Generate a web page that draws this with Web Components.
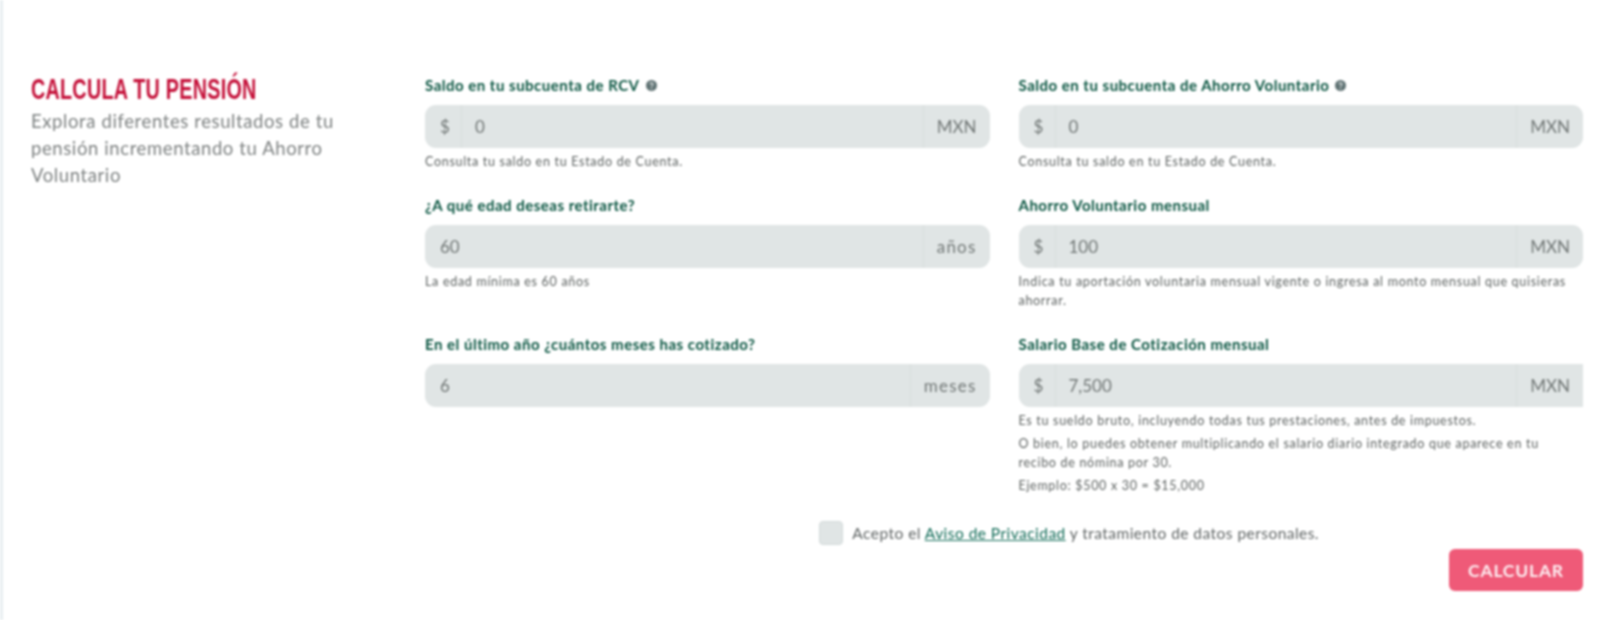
<!DOCTYPE html>
<html lang="es">
<head>
<meta charset="utf-8">
<title>Calcula tu pensión</title>
<style>
  html, body { margin: 0; background: #fff; }
</style>
</head>
<body>
<pension-page>
  <pension-intro slot="intro" heading="CALCULA TU PENSIÓN">Explora diferentes resultados de tu pensión incrementando tu Ahorro Voluntario</pension-intro>

  <money-field label="Saldo en tu subcuenta de RCV" info prefix="$" suffix="MXN" value="0">
    <p>Consulta tu saldo en tu Estado de Cuenta.</p>
  </money-field>
  <money-field label="Saldo en tu subcuenta de Ahorro Voluntario" info prefix="$" suffix="MXN" value="0">
    <p>Consulta tu saldo en tu Estado de Cuenta.</p>
  </money-field>
  <money-field label="¿A qué edad deseas retirarte?" suffix="años" value="60">
    <p>La edad mínima es 60 años</p>
  </money-field>
  <money-field label="Ahorro Voluntario mensual" prefix="$" suffix="MXN" value="100">
    <p>Indica tu aportación voluntaria mensual vigente o ingresa al monto mensual que quisieras ahorrar.</p>
  </money-field>
  <money-field label="En el último año ¿cuántos meses has cotizado?" suffix="meses" value="6"></money-field>
  <money-field label="Salario Base de Cotización mensual" prefix="$" suffix="MXN" value="7,500" square>
    <p>Es tu sueldo bruto, incluyendo todas tus prestaciones, antes de impuestos.</p>
    <p>O bien, lo puedes obtener multiplicando el salario diario integrado que aparece en tu recibo de nómina por 30.</p>
    <p>Ejemplo: $500 x 30 = $15,000</p>
  </money-field>

  <privacy-check slot="actions"></privacy-check>
  <pension-button slot="actions">CALCULAR</pension-button>
</pension-page>

<script>
const FONT = '"Lato", "Open Sans", sans-serif';

class PensionPage extends HTMLElement {
    constructor() {
        super();
        this.attachShadow({ mode: 'open' });
        this.shadowRoot.innerHTML = `
        <style>
            :host { display: block; height: 620px; box-sizing: border-box; overflow: hidden;
                    border-left: 3px solid #e8eef1; background: #fff; font-family: ${FONT};
                    filter: blur(.8px); }
            .wrap { display: flex; padding: 75px 28px 0 28px; }
            .side { flex: 0 0 394px; }
            .main { flex: 1; min-width: 0; }
            .grid { display: grid; grid-template-columns: 1fr 1fr; column-gap: 29px; row-gap: 20px; }
            .actions { display: flex; flex-direction: column; align-items: flex-end; margin-top: 22px; }
        </style>
        <div class="wrap">
            <div class="side"><slot name="intro"></slot></div>
            <div class="main">
                <div class="grid"><slot></slot></div>
                <div class="actions"><slot name="actions"></slot></div>
            </div>
        </div>`;
    }
}

class PensionIntro extends HTMLElement {
    constructor() {
        super();
        this.attachShadow({ mode: 'open' });
        this.shadowRoot.innerHTML = `
        <style>
            :host { display: block; }
            /* no condensed family installed, so squeeze the sans bold */
            h2 { margin: -2px 0 4px; height: 31px; font: 700 30px/31px "Liberation Sans", sans-serif; white-space: nowrap;
                 color: #c40f38; letter-spacing: .4px; transform: scaleX(.658); transform-origin: 0 50%; }
            p { margin: 0; width: 310px; font-size: 18.5px; line-height: 27px; color: #7d8181; letter-spacing: .6px; }
        </style>
        <h2></h2>
        <p><slot></slot></p>`;
        this.shadowRoot.querySelector('h2').textContent = this.getAttribute('heading');
    }
}

class MoneyField extends HTMLElement {
    constructor() {
        super();
        this.attachShadow({ mode: 'open' });
        this.shadowRoot.innerHTML = `
        <style>
            :host { display: block; min-width: 0; }
            label { display: flex; align-items: center; gap: 6px; height: 20px; margin-bottom: 10px;
                    font-size: 15px; font-weight: 700; line-height: 20px; letter-spacing: .5px;
                    color: #07533f; white-space: nowrap; }
            svg { width: 11px; height: 11px; flex: none; }
            .box { display: flex; height: 43px; border-radius: 11px; background: #e0e5e5; overflow: hidden;
                   font-size: 17px; color: #717776; line-height: 43px; }
            :host([square]) .box { border-radius: 11px 0 0 11px; }
            .pre { flex: none; box-sizing: border-box; width: 37px; padding-left: 15px; border-right: 1px solid #d8dedd; }
            .val { flex: 1; padding-left: 13px; }
            :host(:not([prefix])) .val { padding-left: 15px; }
            .suf { flex: none; padding: 0 13px; border-left: 1px solid #d8dedd; }
            :host(:not([prefix])) .suf { letter-spacing: 1.2px; }
            .help { margin-top: 4px; padding-right: 12px; font-size: 12.5px; line-height: 19px; letter-spacing: .7px; color: #5d6261; }
            ::slotted(p) { margin: 0 0 4px; }
        </style>
        <label><span class="text"></span></label>
        <div class="box"><span class="val"></span><span class="suf"></span></div>
        <div class="help"><slot></slot></div>`;

        let root = this.shadowRoot;
        root.querySelector('.text').textContent = this.getAttribute('label');
        root.querySelector('.val').textContent = this.getAttribute('value');
        root.querySelector('.suf').textContent = this.getAttribute('suffix');

        if (this.hasAttribute('prefix')) {
            let pre = document.createElement('span');
            pre.className = 'pre';
            pre.textContent = this.getAttribute('prefix');
            root.querySelector('.box').prepend(pre);
        }
        if (this.hasAttribute('info')) {
            root.querySelector('label').insertAdjacentHTML('beforeend',
                `<svg viewBox="0 0 12 12" aria-hidden="true"><circle cx="6" cy="6" r="6" fill="#5f7273"/><path d="M4.4 4.7a1.6 1.6 0 1 1 2.4 1.4c-.5.3-.8.6-.8 1.2" fill="none" stroke="#e6eaea" stroke-width="1.2"/><circle cx="6" cy="9.2" r=".8" fill="#e6eaea"/></svg>`);
        }
    }
}

class PrivacyCheck extends HTMLElement {
    constructor() {
        super();
        this.attachShadow({ mode: 'open' });
        this.shadowRoot.innerHTML = `
        <style>
            :host { display: flex; align-items: center; gap: 9px; margin-right: 264px; height: 24px;
                    font-size: 15.5px; letter-spacing: .46px; color: #5f6464; white-space: nowrap; }
            .box { width: 22px; height: 22px; border: 1px solid #d3dada; border-radius: 4px; background: #e0e5e5; }
            a { color: #0f6a56; text-decoration: underline; }
        </style>
        <span class="box"></span>
        <span>Acepto el <a href="#">Aviso de Privacidad</a> y tratamiento de datos personales.</span>`;
    }
}

class PensionButton extends HTMLElement {
    constructor() {
        super();
        this.attachShadow({ mode: 'open' });
        this.shadowRoot.innerHTML = `
        <style>
            :host { display: block; margin-top: 4px; }
            button { display: block; width: 134px; height: 42px; padding: 0; border: 0; border-radius: 6px;
                     background: #ef5a78; color: #fdeef1; font: 700 17.5px ${FONT}; letter-spacing: .8px; }
        </style>
        <button type="button"><slot></slot></button>`;
    }
}

customElements.define('pension-page', PensionPage);
customElements.define('pension-intro', PensionIntro);
customElements.define('money-field', MoneyField);
customElements.define('privacy-check', PrivacyCheck);
customElements.define('pension-button', PensionButton);
</script>
</body>
</html>
